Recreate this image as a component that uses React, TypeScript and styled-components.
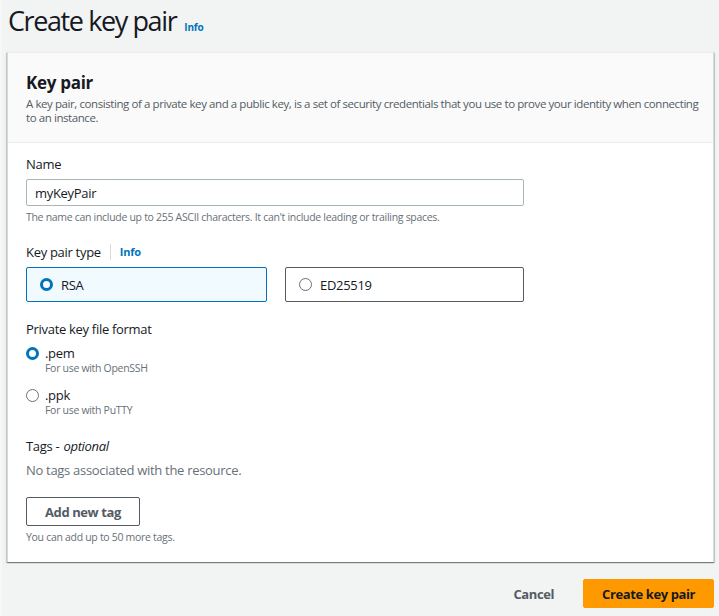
import React, { useState } from "react";
import styled, { createGlobalStyle } from "styled-components";

const GlobalStyle = createGlobalStyle`
  html, body {
    margin: 0;
    padding: 0;
    background: #f2f3f3;
  }
  body {
    font-family: "Open Sans", "Noto Sans", Arial, sans-serif;
    color: #16191f;
  }
  * {
    box-sizing: border-box;
  }
`;

const Page = styled.div`
  width: 719px;
  height: 616px;
  padding: 0 5px 0 5px;
  border-left: 2px solid #f7f7f7;
  overflow: hidden;
`;

const TitleRow = styled.div`
  display: flex;
  align-items: baseline;
  gap: 8px;
  height: 52px;
  padding: 3px 0 0 1px;
`;

const Title = styled.h1`
  margin: 0;
  font-size: 27px;
  font-weight: 400;
  letter-spacing: -1.4px;
  line-height: 36px;
  color: #16191f;
`;

const InfoLink = styled.a<{ $small?: boolean }>`
  color: #0073bb;
  font-weight: 700;
  font-size: ${({ $small }) => ($small ? "10px" : "11px")};
  letter-spacing: -0.2px;
  text-decoration: none;
  cursor: pointer;
`;

const Card = styled.section`
  background: #fff;
  border-left: 1px solid #d5dbdb;
  border-right: 1px solid #d5dbdb;
  box-shadow: 0 1px 1px 0 rgba(0, 28, 36, 0.35), 1px 1px 1px 0 rgba(0, 28, 36, 0.15),
    -1px 1px 1px 0 rgba(0, 28, 36, 0.15);
`;

const CardHeader = styled.header`
  background: #fafafa;
  border-top: 1px solid #eaeded;
  border-bottom: 1px solid #eaeded;
  padding: 19px 6px 17px 18px;
`;

const CardTitle = styled.h2`
  margin: 0;
  font-size: 17px;
  font-weight: 700;
  line-height: 22px;
  letter-spacing: -0.3px;
`;

const CardDesc = styled.p`
  margin: 3px 0 0;
  font-size: 11.5px;
  line-height: 14px;
  color: #545b64;
  letter-spacing: -0.42px;
`;

const CardBody = styled.div`
  padding: 12px 18px 18px;
  display: flex;
  flex-direction: column;
`;

const Field = styled.div<{ $gap?: number }>`
  display: flex;
  flex-direction: column;
  margin-bottom: ${({ $gap }) => $gap ?? 18}px;
`;

const Label = styled.label<{ $space?: number }>`
  display: flex;
  align-items: center;
  font-size: 13px;
  line-height: 18px;
  letter-spacing: -0.3px;
  color: #16191f;
  margin-bottom: ${({ $space }) => $space ?? 6}px;

  em {
    margin-left: 4px;
    font-style: italic;
  }
`;

const LabelDivider = styled.span`
  width: 1px;
  height: 16px;
  background: #d5dbdb;
  margin: 0 9px 0 9px;
`;

const TextInput = styled.input`
  width: 498px;
  height: 27px;
  border: 1px solid #aab7b8;
  border-radius: 2px;
  padding: 0 8px;
  font-family: inherit;
  font-size: 13px;
  letter-spacing: -0.3px;
  color: #16191f;
  outline: none;
`;

const Hint = styled.div`
  margin-top: 4px;
  font-size: 10.5px;
  line-height: 14px;
  letter-spacing: -0.3px;
  color: #687078;
`;

const Tiles = styled.div`
  display: grid;
  grid-template-columns: 241px 239px;
  gap: 18px;
`;

const Tile = styled.label<{ $selected: boolean }>`
  display: flex;
  align-items: center;
  gap: 8px;
  height: 35px;
  padding: 0 13px;
  border: 1px solid ${({ $selected }) => ($selected ? "#0073bb" : "#545b64")};
  background: ${({ $selected }) => ($selected ? "#f1faff" : "#fff")};
  border-radius: 2px;
  font-size: 13px;
  letter-spacing: -0.3px;
  cursor: pointer;
`;

const RadioDot = styled.span<{ $checked: boolean }>`
  flex: none;
  width: 13px;
  height: 13px;
  border-radius: 50%;
  border: ${({ $checked }) => ($checked ? "3.5px solid #0073bb" : "1px solid #687078")};
  background: #fff;
`;

const Option = styled.label`
  display: grid;
  grid-template-columns: 13px 1fr;
  column-gap: 6px;
  align-items: center;
  margin-bottom: 12px;
  cursor: pointer;
`;

const OptionTitle = styled.span`
  font-size: 13px;
  line-height: 16px;
  letter-spacing: -0.3px;
`;

const OptionDesc = styled.span`
  grid-column: 2;
  font-size: 10.5px;
  line-height: 14px;
  letter-spacing: -0.3px;
  color: #687078;
`;

const EmptyText = styled.div`
  font-size: 13px;
  line-height: 18px;
  letter-spacing: -0.3px;
  color: #687078;
`;

const ButtonRow = styled.div`
  margin-top: 18px;
`;

const Button = styled.button<{ $variant?: "normal" | "primary" | "link" }>`
  height: 29px;
  padding: 0 ${({ $variant }) => ($variant === "link" ? "12px" : "18px")};
  font-family: inherit;
  font-size: 13px;
  font-weight: 700;
  letter-spacing: -0.4px;
  border-radius: 2px;
  cursor: pointer;
  color: ${({ $variant }) => ($variant === "primary" ? "#16191f" : "#545b64")};
  background: ${({ $variant }) =>
    $variant === "primary" ? "#ff9900" : $variant === "link" ? "transparent" : "#fff"};
  border: 1px solid
    ${({ $variant }) =>
      $variant === "primary" ? "#ff9900" : $variant === "link" ? "transparent" : "#545b64"};
`;

const Footer = styled.div`
  display: flex;
  justify-content: flex-end;
  align-items: center;
  gap: 16px;
  padding-top: 17px;
`;

const App = () => {
  const [keyType, setKeyType] = useState("rsa");
  const [format, setFormat] = useState("pem");

  return (
    <>
      <GlobalStyle />
      <Page>
        <TitleRow>
          <Title>Create key pair</Title>
          <InfoLink $small>Info</InfoLink>
        </TitleRow>

        <Card>
          <CardHeader>
            <CardTitle>Key pair</CardTitle>
            <CardDesc>
              A key pair, consisting of a private key and a public key, is a set of security
              credentials that you use to prove your identity when connecting to an instance.
            </CardDesc>
          </CardHeader>

          <CardBody>
            <Field $gap={19}>
              <Label>Name</Label>
              <TextInput defaultValue="myKeyPair" />
              <Hint>
                The name can include up to 255 ASCII characters. It can't include leading or
                trailing spaces.
              </Hint>
            </Field>

            <Field $gap={18}>
              <Label>
                Key pair type
                <LabelDivider />
                <InfoLink>Info</InfoLink>
              </Label>
              <Tiles>
                <Tile $selected={keyType === "rsa"} onClick={() => setKeyType("rsa")}>
                  <RadioDot $checked={keyType === "rsa"} />
                  RSA
                </Tile>
                <Tile $selected={keyType === "ed"} onClick={() => setKeyType("ed")}>
                  <RadioDot $checked={keyType === "ed"} />
                  ED25519
                </Tile>
              </Tiles>
            </Field>

            <Field $gap={8}>
              <Label $space={7}>Private key file format</Label>
              <Option onClick={() => setFormat("pem")}>
                <RadioDot $checked={format === "pem"} />
                <OptionTitle>.pem</OptionTitle>
                <OptionDesc>For use with OpenSSH</OptionDesc>
              </Option>
              <Option onClick={() => setFormat("ppk")}>
                <RadioDot $checked={format === "ppk"} />
                <OptionTitle>.ppk</OptionTitle>
                <OptionDesc>For use with PuTTY</OptionDesc>
              </Option>
            </Field>

            <Field $gap={0}>
              <Label>
                Tags -<em>optional</em>
              </Label>
              <EmptyText>No tags associated with the resource.</EmptyText>
              <ButtonRow>
                <Button>Add new tag</Button>
              </ButtonRow>
              <Hint>You can add up to 50 more tags.</Hint>
            </Field>
          </CardBody>
        </Card>

        <Footer>
          <Button $variant="link">Cancel</Button>
          <Button $variant="primary">Create key pair</Button>
        </Footer>
      </Page>
    </>
  );
};

export default App;
